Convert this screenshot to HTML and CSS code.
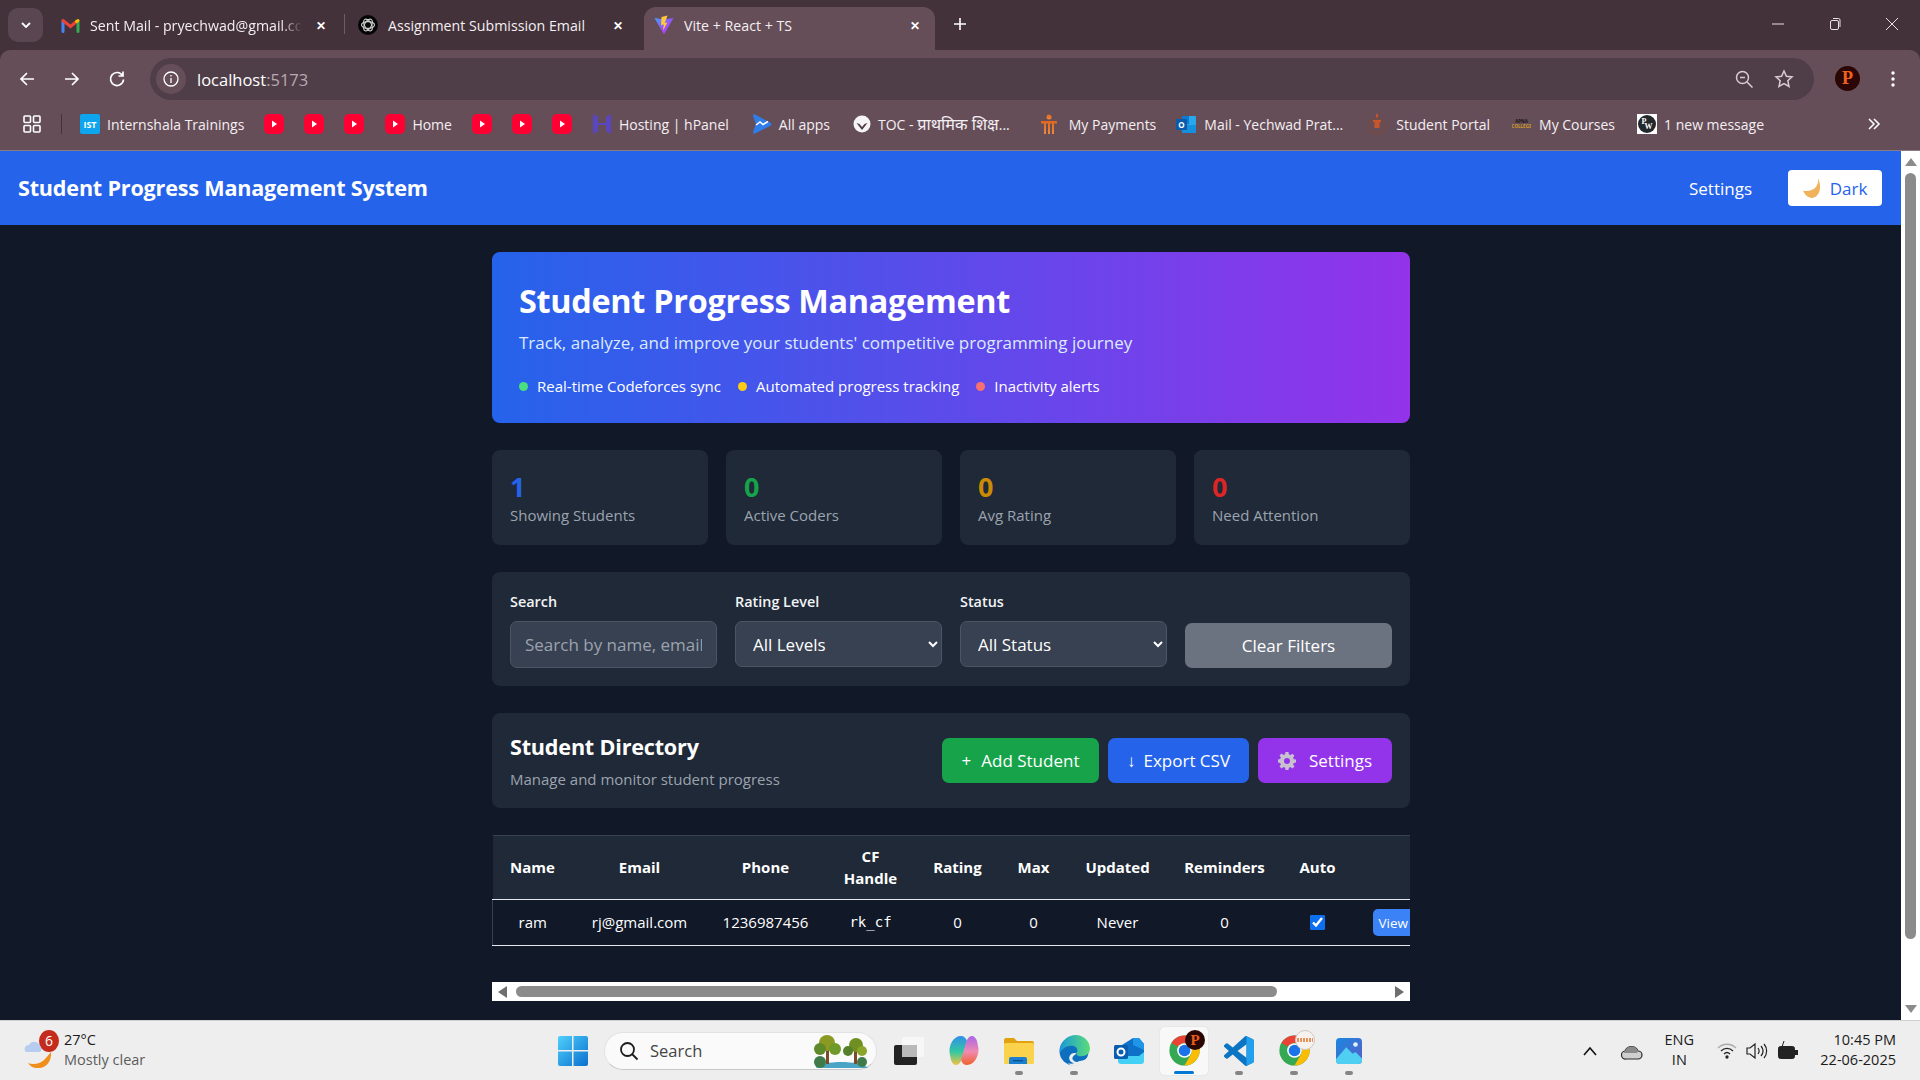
FILE: index.html
```html
<!DOCTYPE html>
<html lang="en">
<head>
    <meta charset="UTF-8">
    <title>Vite + React + TS</title>
    <link rel="stylesheet" href="styles.css">
</head>
<body>
    <svg class="defs" width="0" height="0">
        <defs>
            <symbol id="yt" viewBox="0 0 20 20">
                <rect width="20" height="20" rx="5" fill="#ff0033"/>
                <path d="M8 6.500l5 3.500-5 3.500z" fill="#fff"/>
            </symbol>
            <symbol id="chrome" viewBox="0 0 40 40">
                <circle cx="20" cy="20" r="19.500" fill="#34a853"/>
                <path d="M20 .5a19.500 19.500 0 0 1 17 9.800H20a9.500 9.500 0 0 0-8.200 4.700L3.300 10.200A19.500 19.500 0 0 1 20 .5z" fill="#ea4335"/>
                <path d="M37 10.300A19.500 19.500 0 0 1 20 39.500l8.200-14.500A9.500 9.500 0 0 0 28.200 15.200z" fill="#fbbc04"/>
                <circle cx="20" cy="20" r="9.500" fill="#fff"/>
                <circle cx="20" cy="20" r="7.500" fill="#1a73e8"/>
            </symbol>
            <linearGradient id="wg" x1="0" y1="0" x2="1" y2="1"><stop offset="0" stop-color="#4fd0fb"/><stop offset="1" stop-color="#0a6fd0"/></linearGradient>
            <linearGradient id="pg" x1="0" y1="0" x2="1" y2="1"><stop offset="0" stop-color="#1a87e0"/><stop offset="1" stop-color="#5a5ec8"/></linearGradient>
            <linearGradient id="vg" x1="0" y1="0" x2="1" y2="1"><stop offset="0" stop-color="#41a0ff"/><stop offset=".6" stop-color="#a04cf5"/><stop offset="1" stop-color="#bd34fe"/></linearGradient>
            <linearGradient id="cl" x1="0" y1="0" x2="0" y2="1"><stop offset="0" stop-color="#2f8fe8"/><stop offset=".55" stop-color="#35c8a0"/><stop offset="1" stop-color="#f5c242"/></linearGradient>
            <linearGradient id="cr" x1="0" y1="0" x2="0" y2="1"><stop offset="0" stop-color="#a868e8"/><stop offset=".55" stop-color="#f08ab0"/><stop offset="1" stop-color="#f0602a"/></linearGradient>
            <linearGradient id="eg" x1="0" y1="0" x2="1" y2="0"><stop offset="0" stop-color="#1a9ad8"/><stop offset="1" stop-color="#5bdc78"/></linearGradient>
            <linearGradient id="pay" x1="0" y1="0" x2="0" y2="1"><stop offset="0" stop-color="#e0661e"/><stop offset="1" stop-color="#f08a3a"/></linearGradient>
        </defs>
    </svg>

    <div class="chrome">
        <div class="tabstrip">
            <button class="tab-search">
                <svg width="12" height="12" viewBox="0 0 12 12"><path d="M2 4l4 4 4-4" fill="none" stroke="#fff" stroke-width="1.800"/></svg>
            </button>
            <div class="tab tab-gmail">
                <svg width="19" height="15" viewBox="0 0 19 15" fill="none" stroke-linecap="round">
                    <path d="M2 3.500V13.500" stroke="#4285f4" stroke-width="3"/>
                    <path d="M17 3.500V13.500" stroke="#34a853" stroke-width="3"/>
                    <path d="M2 2.500L9.500 8.500 15 4" stroke="#ea4335" stroke-width="3"/>
                    <path d="M15.500 3.500l1.500-1" stroke="#fbbc04" stroke-width="3"/>
                </svg>
                <span class="tab-title fade">Sent Mail - pryechwad@gmail.com</span>
                <span class="tab-x">✕</span>
            </div>
            <span class="tab-sep"></span>
            <div class="tab tab-gpt">
                <svg width="20" height="20" viewBox="0 0 20 20">
                    <circle cx="10" cy="10" r="10" fill="#050505"/>
                    <g fill="none" stroke="#cfcfcf" stroke-width="1.100">
                        <ellipse cx="10" cy="10" rx="6.500" ry="3.400"/>
                        <ellipse cx="10" cy="10" rx="6.500" ry="3.400" transform="rotate(60 10 10)"/>
                        <ellipse cx="10" cy="10" rx="6.500" ry="3.400" transform="rotate(120 10 10)"/>
                    </g>
                </svg>
                <span class="tab-title">Assignment Submission Email</span>
                <span class="tab-x">✕</span>
            </div>
            <div class="tab tab-active">
                <svg width="20" height="20" viewBox="0 0 20 20">
                    <path d="M0.500 3L10 4.500 19.500 3 10 19.500z" fill="url(#vg)"/>
                    <path d="M13.500 0.500L7.500 2l-.5 8 2.800-.6-.8 6 4.500-8-2.700.5z" fill="#ffc83a"/>
                </svg>
                <span class="tab-title">Vite + React + TS</span>
                <span class="tab-x">✕</span>
            </div>
            <span class="tab-new">
                <svg width="14" height="14" viewBox="0 0 14 14"><path d="M7 1v12M1 7h12" stroke="#fff" stroke-width="1.600"/></svg>
            </span>
            <div class="win-controls">
                <svg width="14" height="14" viewBox="0 0 14 14"><path d="M1 7h12" stroke="#e8e0e4" stroke-width="1"/></svg>
                <svg width="14" height="14" viewBox="0 0 14 14" fill="none" stroke="#e8e0e4"><rect x="2.500" y="3.500" width="8" height="9" rx="1.500"/><path d="M5 1.500h5.500a1.500 1.500 0 0 1 1.500 1.500v7"/></svg>
                <svg width="14" height="14" viewBox="0 0 14 14"><path d="M1 1l12 12M13 1L1 13" stroke="#e8e0e4" stroke-width="1"/></svg>
            </div>
        </div>

        <div class="bars">
            <div class="toolbar">
                <svg class="nav-btn" width="18" height="18" viewBox="0 0 18 18" fill="none" stroke="#fff" stroke-width="1.700"><path d="M16 9H3M9 3L3 9l6 6"/></svg>
                <svg class="nav-btn" width="18" height="18" viewBox="0 0 18 18" fill="none" stroke="#fff" stroke-width="1.700"><path d="M2 9h13M9 3l6 6-6 6"/></svg>
                <svg class="nav-btn" width="18" height="18" viewBox="0 0 18 18" fill="none" stroke="#fff" stroke-width="1.700"><path d="M14.500 5.500A6.500 6.500 0 1 0 15.500 9.500M15 1.500v4.500h-4.500"/></svg>
                <div class="omnibox">
                    <span class="site-info">
                        <svg width="18" height="18" viewBox="0 0 18 18" fill="none" stroke="#fff" stroke-width="1.300"><circle cx="9" cy="9" r="7"/><path d="M9 8v5M9 5v1.500"/></svg>
                    </span>
                    <span class="url">localhost<span class="url-port">:5173</span></span>
                    <svg class="omni-icon" width="20" height="20" viewBox="0 0 20 20" fill="none" stroke="#d8ccd2" stroke-width="1.500"><circle cx="8.500" cy="8.500" r="6"/><path d="M13 13l5.500 5.500M6 8.500h5"/></svg>
                    <svg class="omni-icon" width="20" height="20" viewBox="0 0 20 20" fill="none" stroke="#d8ccd2" stroke-width="1.500"><path d="M10 2l2.400 5.300 5.600.6-4.200 3.800 1.200 5.700L10 14.500l-5 2.900 1.200-5.700L2 7.900l5.600-.6z"/></svg>
                </div>
                <span class="avatar">P</span>
                <svg class="kebab" width="4" height="18" viewBox="0 0 4 18" fill="#fff"><circle cx="2" cy="3" r="1.700"/><circle cx="2" cy="9" r="1.700"/><circle cx="2" cy="15" r="1.700"/></svg>
            </div>

            <div class="bookmarks">
                <svg class="bm-grid" width="18" height="18" viewBox="0 0 18 18" fill="none" stroke="#fff" stroke-width="1.600"><rect x="1" y="1" width="6.500" height="6.500" rx="1"/><rect x="10.500" y="1" width="6.500" height="6.500" rx="1"/><rect x="1" y="10.500" width="6.500" height="6.500" rx="1"/><rect x="10.500" y="10.500" width="6.500" height="6.500" rx="1"/></svg>
                <span class="bm-sep"></span>
                <div class="bm bm-ist">
                    <svg width="20" height="20" viewBox="0 0 20 20"><rect width="20" height="20" rx="2" fill="#0ca5ee"/><text x="10" y="14" class="ist-text">IST</text></svg>
                    <span>Internshala Trainings</span>
                </div>
                <svg class="bm-yt" width="20" height="20"><use href="#yt"/></svg>
                <svg class="bm-yt" width="20" height="20"><use href="#yt"/></svg>
                <svg class="bm-yt" width="20" height="20"><use href="#yt"/></svg>
                <div class="bm bm-home">
                    <svg width="20" height="20"><use href="#yt"/></svg>
                    <span>Home</span>
                </div>
                <svg class="bm-yt" width="20" height="20"><use href="#yt"/></svg>
                <svg class="bm-yt" width="20" height="20"><use href="#yt"/></svg>
                <svg class="bm-yt" width="20" height="20"><use href="#yt"/></svg>
                <div class="bm bm-host">
                    <svg width="20" height="20" viewBox="0 0 20 20" fill="#5a46c0"><path d="M1 0l5 3v6h8V3l5-3v20l-5-3v-6H6v6l-5 3z"/></svg>
                    <span>Hosting | hPanel</span>
                </div>
                <div class="bm bm-apps">
                    <svg width="20" height="20" viewBox="0 0 20 20"><path d="M1 2c0-1.500 1-2 2-1.500l15 8c2 1 2 2.500 0 3.500L3 19.500c-1 .5-2 0-2-1.500l3-8z" fill="#2f7de8"/><path d="M4 11l4-3 3 2.500 5-3" fill="none" stroke="#fff" stroke-width="1.500"/></svg>
                    <span>All apps</span>
                </div>
                <div class="bm bm-toc">
                    <svg width="18" height="20" viewBox="0 0 18 20"><circle cx="9" cy="10" r="8.500" fill="#f6f4f5"/><path d="M3.500 9l5.500 7 5.500-7-3 1-2.500 3-2.500-3z" fill="#4e3b44"/></svg>
                    <span>TOC - <span class="deva">प्राथमिक शिक्ष</span>...</span>
                </div>
                <div class="bm bm-pay">
                    <svg width="18" height="22" viewBox="0 0 18 22" fill="url(#pay)"><circle cx="9" cy="4" r="2.500"/><path d="M1 8h16v2.500H1zM4 10.500h2V21H4zM8 10.500h2V21H8zM12 10.500h2V21h-2z"/></svg>
                    <span>My Payments</span>
                </div>
                <div class="bm bm-mail">
                    <svg width="20" height="20" viewBox="0 0 20 20"><rect x="6" y="2" width="14" height="17" rx="1" fill="#28a8ea"/><rect x="6" y="2" width="7" height="8" fill="#0f78d4"/><rect x="6" y="11" width="14" height="8" fill="#1490df"/><rect y="5" width="11" height="11" rx="1" fill="#0a5cab"/><text x="5.500" y="13.800" class="o-text">O</text></svg>
                    <span>Mail - Yechwad Prat...</span>
                </div>
                <div class="bm bm-student">
                    <svg width="18" height="24" viewBox="0 0 18 24" fill="none"><circle cx="9" cy="14" r="8" stroke="#7a4a3f" stroke-width="1.500"/><path d="M9 1c1.500 2 1.500 4 0 5-1.500-1-1.500-3 0-5zM5 8h8v2h-1.500v6h-5v-6H5z" fill="#c9552a"/></svg>
                    <span>Student Portal</span>
                </div>
                <div class="bm bm-courses">
                    <svg width="19" height="14" viewBox="0 0 19 14"><text x="9.500" y="5.500" class="apna-top">APNA</text><text x="9.500" y="11" class="apna-low">COLLEGE</text></svg>
                    <span>My Courses</span>
                </div>
                <div class="bm bm-msg">
                    <svg width="20" height="20" viewBox="0 0 20 20"><rect width="20" height="20" fill="#fff"/><circle cx="10" cy="10" r="9" fill="#23282d"/><text x="7" y="9.500" class="wp-text">P</text><text x="11.500" y="15" class="wp-text">W</text></svg>
                    <span>1 new message</span>
                </div>
                <svg class="bm-more" width="14" height="14" viewBox="0 0 14 14" fill="none" stroke="#fff" stroke-width="1.500"><path d="M2 2l5 5-5 5M7 2l5 5-5 5"/></svg>
            </div>
        </div>
    </div>

    <div class="viewport">
        <div class="page">
            <header class="app-header">
                <div class="app-title">Student Progress Management System</div>
                <div class="header-right">
                    <a class="header-link">Settings</a>
                    <button class="theme-btn">
                        <svg width="20" height="22" viewBox="0 0 20 22"><path d="M15 1c1 6-2 13-12 13-1 0-2 0-3-.500C2 19 7 22 11 20.500c6-2 8-11 4-19.500z" fill="#f0b35c"/></svg>
                        Dark
                    </button>
                </div>
            </header>

            <main class="main">
                <section class="hero">
                    <h1>Student Progress Management</h1>
                    <p class="hero-sub">Track, analyze, and improve your students' competitive programming journey</p>
                    <div class="hero-points">
                        <span class="point"><i class="dot dot-green"></i>Real-time Codeforces sync</span>
                        <span class="point"><i class="dot dot-yellow"></i>Automated progress tracking</span>
                        <span class="point"><i class="dot dot-red"></i>Inactivity alerts</span>
                    </div>
                </section>

                <section class="stats">
                    <div class="stat"><div class="stat-num num-blue">1</div><div class="stat-label">Showing Students</div></div>
                    <div class="stat"><div class="stat-num num-green">0</div><div class="stat-label">Active Coders</div></div>
                    <div class="stat"><div class="stat-num num-amber">0</div><div class="stat-label">Avg Rating</div></div>
                    <div class="stat"><div class="stat-num num-red">0</div><div class="stat-label">Need Attention</div></div>
                </section>

                <section class="filters">
                    <div class="field">
                        <label>Search</label>
                        <input type="text" placeholder="Search by name, email or handle">
                    </div>
                    <div class="field">
                        <label>Rating Level</label>
                        <select><option>All Levels</option></select>
                    </div>
                    <div class="field">
                        <label>Status</label>
                        <select><option>All Status</option></select>
                    </div>
                    <button class="clear-btn">Clear Filters</button>
                </section>

                <section class="directory">
                    <div>
                        <h2>Student Directory</h2>
                        <p>Manage and monitor student progress</p>
                    </div>
                    <div class="dir-actions">
                        <button class="btn btn-green"><span>+</span>Add Student</button>
                        <button class="btn btn-blue"><span>↓</span>Export CSV</button>
                        <button class="btn btn-purple">
                            <svg width="18" height="18" viewBox="0 0 18 18"><path fill="#c8c2d0" fill-rule="evenodd" d="M7.500 0h3l.4 2.400 1.500.7 2-1.400 2.100 2.100-1.400 2 .7 1.500 2.200.2v3l-2.200.4-.7 1.500 1.400 2-2.100 2.100-2-1.400-1.500.7-.4 2.200h-3l-.4-2.200-1.500-.7-2 1.400-2.100-2.100 1.400-2-.7-1.500L0 10.500v-3l2.200-.4.7-1.500-1.400-2 2.100-2.100 2 1.400 1.500-.7zM9 6a3 3 0 1 0 0 6 3 3 0 0 0 0-6z"/></svg>
                            Settings
                        </button>
                    </div>
                </section>

                <div class="table-wrap">
                    <table class="students">
                        <colgroup>
                            <col class="c-name"><col class="c-email"><col class="c-phone"><col class="c-cf"><col class="c-rating">
                            <col class="c-max"><col class="c-updated"><col class="c-rem"><col class="c-auto"><col class="c-act">
                        </colgroup>
                        <thead>
                            <tr>
                                <th>Name</th><th>Email</th><th>Phone</th><th>CF<br>Handle</th><th>Rating</th>
                                <th>Max</th><th>Updated</th><th>Reminders</th><th>Auto</th><th></th>
                            </tr>
                        </thead>
                        <tbody>
                            <tr>
                                <td>ram</td><td>rj@gmail.com</td><td>1236987456</td><td class="mono">rk_cf</td><td>0</td>
                                <td>0</td><td>Never</td><td>0</td>
                                <td class="check"><input type="checkbox" checked></td>
                                <td class="act"><button class="view-btn">View</button></td>
                            </tr>
                        </tbody>
                    </table>
                </div>

                <div class="hscroll">
                    <i class="arrow-left"></i>
                    <div class="hscroll-track"><div class="hscroll-thumb"></div></div>
                    <i class="arrow-right"></i>
                </div>
            </main>
        </div>
        <div class="vscroll">
            <i class="arrow-up"></i>
            <div class="vscroll-thumb"></div>
            <i class="arrow-down"></i>
        </div>
    </div>

    <footer class="taskbar">
        <div class="weather">
            <svg class="weather-icon" width="30" height="36" viewBox="0 0 30 36">
                <path d="M29 12c1 9-5 17-14 16-4 0-7-2-9-5 5 2 12 1 16-3 3-3 5-6 7-8z" fill="#f08e1c" transform="translate(-2 7)"/>
                <path d="M2 19a4 4 0 0 1 3-7 6 6 0 0 1 11 1 3.500 3.500 0 0 1 0 6z" fill="#b6cdf0"/>
            </svg>
            <span class="weather-badge">6</span>
            <div class="weather-text"><div>27°C</div><div class="weather-sub">Mostly clear</div></div>
        </div>

        <div class="task-center">
            <svg class="ti-win" width="30" height="30" viewBox="0 0 30 30">
                <path fill="url(#wg)" d="M0 2a2 2 0 0 1 2-2h12v14H0zM15.500 0H28a2 2 0 0 1 2 2v12H15.500zM0 15.500h14V30H2a2 2 0 0 1-2-2zM15.500 15.500H30V28a2 2 0 0 1-2 2H15.500z"/>
            </svg>
            <div class="task-search">
                <svg width="20" height="20" viewBox="0 0 20 20" fill="none" stroke="#1c1c1c" stroke-width="1.800"><circle cx="8.500" cy="8.500" r="6.500"/><path d="M13 13l5.500 5.500"/></svg>
                <span>Search</span>
                <svg class="search-art" width="56" height="34" viewBox="0 0 56 34">
                    <path d="M4 34c6-8 44-8 52 0z" fill="#4aa5c4"/>
                    <rect x="14" y="12" width="3" height="18" fill="#7a4b2b"/><rect x="42" y="14" width="3" height="16" fill="#7a4b2b"/>
                    <circle cx="15" cy="9" r="8" fill="#8a9a22"/><circle cx="8" cy="15" r="6" fill="#5f8a2a"/><circle cx="23" cy="15" r="6" fill="#6f9a2a"/>
                    <circle cx="44" cy="11" r="7" fill="#6f8f22"/><circle cx="50" cy="17" r="5" fill="#8aa52a"/><circle cx="36" cy="17" r="5" fill="#557f2a"/>
                    <circle cx="8" cy="28" r="6" fill="#3f7a4a"/><circle cx="50" cy="28" r="5" fill="#3f7a4a"/>
                </svg>
            </div>
            <svg class="ti" width="30" height="28" viewBox="0 0 30 28"><rect x="0" y="8" width="23" height="20" rx="2" fill="#222"/><rect x="8" y="0" width="22" height="20" rx="2" fill="#f7f7f7"/><rect x="8" y="8" width="15" height="12" fill="#b9b9b9"/></svg>
            <svg class="ti ti-copilot" width="30" height="31" viewBox="0 0 30 31"><path d="M12 1c3 0 5 2 6 5l-5 17c-1 4-3 7-6 7-2 0-4-2-5-5l-1-5C-1 13 3 1 12 1z" fill="url(#cl)"/><path d="M18 30c-3 0-5-2-6-5l5-17c1-4 3-7 6-7 2 0 4 2 5 5l1 5c2 6-2 19-11 19z" fill="url(#cr)"/></svg>
            <div class="ti-wrap">
                <svg width="30" height="26" viewBox="0 0 30 26"><path d="M0 2a2 2 0 0 1 2-2h8l3 3h15a2 2 0 0 1 2 2v3H0z" fill="#dfa312"/><rect y="5" width="30" height="21" rx="1.500" fill="#fbd24c"/><path d="M5 26v-5a2 2 0 0 1 2-2h14a2 2 0 0 1 2 2v5z" fill="#1a7fd0"/><rect x="9" y="22" width="10" height="1.300" fill="#0c4f8f"/></svg>
                <i class="task-dot"></i>
            </div>
            <div class="ti-wrap">
                <svg width="31" height="31" viewBox="0 0 32 32"><circle cx="15.500" cy="16.500" r="15" fill="#0f6fbf"/><path d="M1 14C3 5 10 0 17 0c9 0 15 7 15 14 0 5-4 8-9 8-3 0-5-1-5-3 0-1 1-2 1-3 0-3-3-5-6-5C9 11 4 13 1 18z" fill="url(#eg)"/><path d="M31 21c-2 6-8 11-15 11-3 0-5-1-7-3 2 1 5 1 8-.5 3-1 4-2 6-2 3 0 6-2 8-5.500z" fill="#eeeeee"/><path d="M18 19c-1 1-5 3-4 6 1 2 3 3 6 3-3 2-7 1-9-2-2-5 3-9 7-7z" fill="#eeeeee"/></svg>
                <i class="task-dot"></i>
            </div>
            <div class="ti-wrap">
                <svg width="30" height="26" viewBox="0 0 30 26"><path d="M4 14h26v9a3 3 0 0 1-3 3H7a3 3 0 0 1-3-3z" fill="#44d0f5"/><path d="M8 7L19 0h6l5 6v8l-5 4H8z" fill="#0f70c8"/><path d="M19 0h6l5 6v6l-11-5z" fill="#1f95e8"/><rect y="7" width="14" height="14" rx="1.500" fill="#0a5cb0"/><circle cx="7" cy="14" r="3.500" fill="none" stroke="#fff" stroke-width="2"/></svg>
            </div>
            <div class="ti-wrap ti-active">
                <svg width="31" height="31"><use href="#chrome"/></svg>
                <span class="chrome-p">P</span>
                <i class="task-bar"></i>
            </div>
            <div class="ti-wrap">
                <svg width="30" height="30" viewBox="0 0 100 100"><path fill="#0b75c4" fill-rule="evenodd" d="M71 99.300a6.200 6.200 0 0 0 4.900-.2l20.500-9.900a6.200 6.200 0 0 0 3.500-5.600V16.400a6.200 6.200 0 0 0-3.500-5.600L75.800.9a6.200 6.200 0 0 0-7.100 1.200L29.300 38.200 12.100 25.100a4.100 4.100 0 0 0-5.300.2l-5.500 5a4.100 4.100 0 0 0 0 6.100L16.200 50 1.300 63.600a4.100 4.100 0 0 0 0 6.100l5.500 5a4.100 4.100 0 0 0 5.300.2l17.200-13.100 39.400 36a6.200 6.200 0 0 0 2.300 1.500zM75 27.300L45.100 50 75 72.700z"/><path fill="#22a0ee" d="M75 .5l21.400 10.300a6.200 6.200 0 0 1 3.500 5.600v67.200a6.200 6.200 0 0 1-3.500 5.600L75 99.500z"/></svg>
                <i class="task-dot"></i>
            </div>
            <div class="ti-wrap">
                <svg width="31" height="31"><use href="#chrome"/></svg>
                <span class="chrome-badge"></span>
                <i class="task-dot"></i>
            </div>
            <div class="ti-wrap">
                <svg width="26" height="26" viewBox="0 0 28 28"><rect width="28" height="28" rx="4" fill="url(#pg)"/><path d="M0 23L11 10l7 7 3-2 7 7v2a4 4 0 0 1-4 4H4a4 4 0 0 1-4-4z" fill="#4fd0f2"/><circle cx="21" cy="7" r="2.500" fill="#dff3fc"/></svg>
                <i class="task-dot"></i>
            </div>
        </div>

        <div class="tray">
            <svg class="tray-caret" width="16" height="10" viewBox="0 0 16 10" fill="none" stroke="#111" stroke-width="1.600"><path d="M2 9l6-7 6 7"/></svg>
            <svg class="tray-cloud" width="22" height="18" viewBox="0 0 22 18"><path d="M5 17a4 4 0 0 1-1-8 7 7 0 0 1 13 0 4 4 0 0 1 0 8z" fill="#cfcfcf" stroke="#2a2a2a" stroke-width="1.200"/><path d="M4 9a7 7 0 0 1 13 0 4 4 0 0 1-1 2H3z" fill="#8a8a8a"/></svg>
            <div class="tray-lang"><div>ENG</div><div>IN</div></div>
            <svg class="tray-ic" width="20" height="18" viewBox="0 0 20 18" fill="none" stroke="#222" stroke-width="1.300"><path d="M1 6c5-5 13-5 18 0" stroke="#aaa"/><path d="M4 9c3.500-3.500 8.500-3.500 12 0M7 12c2-2 4-2 6 0"/><circle cx="10" cy="15" r="1" fill="#222"/></svg>
            <svg class="tray-ic" width="22" height="18" viewBox="0 0 22 18" fill="none" stroke="#222" stroke-width="1.200"><path d="M1 6h3l5-4v14l-5-4H1zM12 6c1.500 2 1.500 4 0 6M15 4c2.500 3 2.500 7 0 10M18 2c3.500 4 3.500 10 0 14"/></svg>
            <svg class="tray-ic" width="22" height="20" viewBox="0 0 22 20"><rect x="1.500" y="5.500" width="16" height="12" rx="2" fill="#222" stroke="#222"/><rect x="18" y="9" width="3" height="5" fill="#222"/><path d="M7 0L5 6h3" fill="none" stroke="#222"/></svg>
            <div class="tray-clock"><div>10:45 PM</div><div>22-06-2025</div></div>
        </div>
    </footer>
</body>
</html>
```

FILE: styles.css
```css
* {
    box-sizing: border-box;
}

html, body {
    margin: 0;
    height: 100%;
    overflow: hidden;
}

body {
    display: flex;
    flex-direction: column;
    width: 1920px;
    height: 1080px;
    font-family: "Open Sans", "Noto Sans", sans-serif;
    font-stretch: 92%;
    background: #111827;
    color: #fff;
}

.defs {
    position: absolute;
}

/* browser chrome */
.chrome {
    height: 151px;
    background: #43323a;
    border-bottom: 1px solid #8a7a82;
    flex: none;
}

.tabstrip {
    height: 50px;
    display: flex;
    align-items: flex-end;
    font-size: 14.200px;
    padding-left: 8px;
}

.tab-search {
    width: 35px;
    height: 34px;
    margin-bottom: 8px;
    border: 0;
    border-radius: 10px;
    background: #5a4650;
    display: flex;
    align-items: center;
    justify-content: center;
    padding: 0;
}

.tab {
    height: 43px;
    display: flex;
    align-items: center;
    border-radius: 12px 12px 0 0;
    color: #f4eff2;
}

.tab-gmail {
    width: 301px;
    padding: 0 18px 7px 18px;
}

.tab-gpt {
    width: 299px;
    padding: 0 21px 7px 13px;
}

.tab-active {
    width: 291px;
    background: #664e59;
    padding: 0 15px 7px 10px;
}

.tab-title {
    flex: 1;
    margin-left: 10px;
    white-space: nowrap;
    overflow: hidden;
}

.fade {
    -webkit-mask-image: linear-gradient(90deg, #000 90%, transparent);
    mask-image: linear-gradient(90deg, #000 90%, transparent);
    margin-right: 14px;
}

.tab-x {
    font-size: 12px;
    color: #fff;
    font-weight: 700;
}

.tab-sep {
    width: 1px;
    height: 20px;
    margin-bottom: 16px;
    background: #6e5b65;
}

.tab-new {
    margin: 0 0 19px 18px;
    display: flex;
}

.win-controls {
    margin: 0 21px 19px auto;
    display: flex;
    gap: 43px;
}

.bars {
    height: 100px;
    background: #664e59;
    border-radius: 10px 10px 0 0;
}

.toolbar {
    height: 50px;
    display: flex;
    align-items: flex-end;
    padding-left: 18px;
}

.nav-btn {
    margin: 0 27px 12px 0;
}

.nav-btn:nth-child(3) {
    margin-right: 24px;
}

.omnibox {
    width: 1664px;
    height: 42px;
    border-radius: 21px;
    background: #4f3e48;
    display: flex;
    align-items: center;
    padding: 0 20px 0 6px;
    font-size: 16.500px;
}

.site-info {
    width: 30px;
    height: 30px;
    border-radius: 50%;
    background: #664e59;
    display: flex;
    align-items: center;
    justify-content: center;
}

.url {
    margin: 0 auto 0 11px;
}

.url-port {
    color: #b9aab2;
}

.omni-icon {
    margin-left: 20px;
}

.avatar {
    width: 25px;
    height: 25px;
    margin: 0 0 9px 21px;
    border-radius: 50%;
    background: #2a0705;
    color: #f2611c;
    font: 700 18px "Liberation Serif", serif;
    text-align: center;
    line-height: 25px;
}

.kebab {
    margin: 0 0 12px 31px;
}

.bookmarks {
    height: 50px;
    display: flex;
    align-items: center;
    font-size: 14px;
    color: #f4eff2;
    padding: 0 0 2px 23px;
}

.bm-sep {
    width: 1px;
    height: 20px;
    margin: 0 18px 0 20px;
    background: #43323a;
}

.bm {
    display: flex;
    align-items: center;
    gap: 7px;
    white-space: nowrap;
}

.deva {
    font-size: 16.300px;
    line-height: 14px;
}

.bm-yt {
    margin-left: 20px;
}

.bm-home {
    margin-left: 21px;
}

.bm-host {
    margin-left: 20px;
}

.bm-apps {
    margin-left: 23px;
}

.bm-toc {
    margin-left: 23px;
}

.bm-pay {
    margin-left: 30px;
    gap: 11px;
}

.bm-mail {
    margin-left: 20px;
    gap: 8px;
}

.bm-student {
    margin-left: 25px;
    gap: 10px;
}

.bm-courses {
    margin-left: 22px;
    gap: 8px;
}

.bm-msg {
    margin-left: 22px;
}

.bm-more {
    margin-left: auto;
    margin-right: 39px;
}

.ist-text {
    font-size: 9px;
    font-weight: 700;
    fill: #fff;
    text-anchor: middle;
}

.o-text {
    font-size: 8px;
    font-weight: 700;
    fill: #fff;
    text-anchor: middle;
}

.apna-top {
    font-size: 4.500px;
    font-weight: 700;
    fill: #1b1216;
    text-anchor: middle;
}

.apna-low {
    font-size: 4.500px;
    font-weight: 700;
    fill: #d19a24;
    text-anchor: middle;
}

.wp-text {
    font: 700 8px "Liberation Serif", serif;
    fill: #fff;
    text-anchor: middle;
}

/* page area */
.viewport {
    height: 869px;
    display: flex;
    flex: none;
}

.page {
    flex: 1;
    padding-left: 1px;
    overflow: hidden;
}

.vscroll {
    width: 19px;
    background: #fff;
    display: flex;
    flex-direction: column;
    align-items: center;
    padding: 7px 0;
}

.vscroll-thumb {
    width: 11px;
    height: 766px;
    margin: 7px 0 auto;
    border-radius: 6px;
    background: #8b8b8b;
}

.arrow-up, .arrow-down {
    width: 0;
    height: 0;
    border-left: 6px solid transparent;
    border-right: 6px solid transparent;
}

.arrow-up {
    border-bottom: 8px solid #8b8b8b;
}

.arrow-down {
    border-top: 8px solid #8b8b8b;
}

.app-header {
    height: 74px;
    margin-left: -1px;
    background: #2563eb;
    display: flex;
    align-items: center;
    justify-content: space-between;
    padding: 0 19px 0 18px;
}

.app-title {
    font-size: 21.600px;
    font-weight: 700;
    letter-spacing: -0.2px;
    margin-bottom: 2px;
}

.header-right {
    display: flex;
    align-items: center;
    gap: 36px;
    font-size: 17px;
}

.theme-btn {
    width: 94px;
    height: 36px;
    border: 0;
    border-radius: 4px;
    background: #fff;
    color: #2563eb;
    font: inherit;
    display: flex;
    align-items: center;
    justify-content: center;
    gap: 7px;
}

.main {
    width: 918px;
    margin: 27px auto 0;
}

.hero {
    height: 171px;
    border-radius: 8px;
    padding: 26px 27px 27px;
    background: linear-gradient(90deg, #2563eb, #9333ea);
    margin-bottom: 27px;
}

.hero h1 {
    margin: 0;
    font-size: 32.400px;
    line-height: 44px;
    font-weight: 700;
    letter-spacing: -0.3px;
}

.hero-sub {
    margin: 9px 0 0;
    font-size: 17px;
    line-height: 24px;
    color: #dbeafe;
}

.hero-points {
    margin-top: 20px;
    display: flex;
    gap: 17px;
    font-size: 15px;
    line-height: 22px;
}

.point {
    display: flex;
    align-items: center;
}

.dot {
    width: 9px;
    height: 9px;
    margin-right: 9px;
    border-radius: 50%;
}

.dot-green {
    background: #4ade80;
}

.dot-yellow {
    background: #facc15;
}

.dot-red {
    background: #f87171;
}

.stats {
    display: grid;
    grid-template-columns: repeat(4, 1fr);
    gap: 18px;
    margin-bottom: 27px;
}

.stat {
    height: 95px;
    padding: 18px;
    border-radius: 8px;
    background: #1f2937;
}

.stat-num {
    font-size: 27px;
    font-weight: 700;
    line-height: 37px;
}

.num-blue {
    color: #2563eb;
}

.num-green {
    color: #16a34a;
}

.num-amber {
    color: #ca8a04;
}

.num-red {
    color: #dc2626;
}

.stat-label {
    font-size: 15px;
    line-height: 21px;
    color: #9ca3af;
}

.filters {
    display: grid;
    grid-template-columns: repeat(4, 207px);
    gap: 18px;
    align-items: end;
    height: 114px;
    padding: 18px;
    border-radius: 8px;
    background: #1f2937;
    margin-bottom: 27px;
}

.field {
    display: flex;
    flex-direction: column;
}

.field label {
    font-size: 14.400px;
    font-weight: 600;
    line-height: 24px;
    margin-bottom: 7px;
    color: #f3f4f6;
}

.field input, .field select {
    width: 100%;
    border: 1px solid #4b5563;
    border-radius: 7px;
    background: #374151;
    color: #fff;
    font: inherit;
    font-size: 17px;
    color-scheme: dark;
}

.field input {
    height: 47px;
    padding: 0 14px;
}

.field input::placeholder {
    color: #9ca3af;
}

.field select {
    height: 46px;
    margin-bottom: 1px;
    padding: 0 13px;
}

.clear-btn {
    height: 45px;
    border: 0;
    border-radius: 7px;
    background: #6b7280;
    color: #fff;
    font: inherit;
    font-size: 17px;
}

.directory {
    height: 95px;
    padding: 0 18px;
    border-radius: 8px;
    background: #1f2937;
    display: flex;
    align-items: center;
    justify-content: space-between;
    margin-bottom: 27px;
}

.directory h2 {
    margin: 0;
    font-size: 21.600px;
    line-height: 28px;
    font-weight: 700;
    letter-spacing: -0.2px;
}

.directory p {
    margin: 8px 0 0;
    font-size: 15px;
    line-height: 20px;
    color: #9ca3af;
}

.dir-actions {
    display: flex;
    gap: 9px;
}

.btn {
    height: 45px;
    border: 0;
    border-radius: 7px;
    color: #fff;
    font: inherit;
    font-size: 17px;
    display: flex;
    align-items: center;
    justify-content: center;
    gap: 10px;
}

.btn-green {
    width: 157px;
    background: #16a34a;
}

.btn-blue {
    width: 141px;
    background: #2563eb;
    gap: 8px;
}

.btn-purple {
    width: 134px;
    background: #9333ea;
    gap: 13px;
}

.table-wrap {
    overflow: hidden;
    padding-bottom: 36px;
}

.students {
    width: 1000px;
    table-layout: fixed;
    border-collapse: collapse;
    font-size: 15px;
    text-align: center;
}

.c-name { width: 80px; }
.c-email { width: 134px; }
.c-phone { width: 118px; }
.c-cf { width: 92px; }
.c-rating { width: 82px; }
.c-max { width: 70px; }
.c-updated { width: 98px; }
.c-rem { width: 116px; }
.c-auto { width: 70px; }
.c-act { width: 140px; }

.students th {
    height: 64px;
    background: #1f2937;
    font-weight: 700;
    line-height: 22px;
    padding: 0 0 2px;
    border-top: 1px solid #374151;
    border-bottom: 1px solid #e5e7eb;
}

.students td {
    height: 46px;
    padding: 0 0 2px;
    border-bottom: 1px solid #e5e7eb;
}

.students tr > td:first-child {
    border-left: 1px solid #374151;
}

.mono {
    font-family: "DejaVu Sans Mono", "Liberation Mono", monospace;
    font-stretch: normal;
    font-size: 14px;
}

.students .check {
    padding: 0;
}

.students input {
    width: 15px;
    height: 15px;
    margin: 0;
    accent-color: #0b6ff0;
    vertical-align: -1px;
}

.students .act {
    text-align: left;
    padding: 0 0 0 20px;
}

.view-btn {
    width: 56px;
    height: 27px;
    border: 0;
    border-radius: 5px;
    background: #3b82f6;
    color: #fff;
    font: inherit;
    font-size: 13.500px;
    padding: 0 0 0 6px;
    text-align: left;
    vertical-align: middle;
}

.hscroll {
    height: 19px;
    background: #fff;
    display: flex;
    align-items: center;
    padding: 0 6px;
}

.hscroll-track {
    flex: 1;
    padding-left: 9px;
}

.hscroll-thumb {
    height: 11px;
    width: 761px;
    border-radius: 6px;
    background: #8b8b8b;
}

.arrow-left, .arrow-right {
    width: 0;
    height: 0;
    border-top: 6px solid transparent;
    border-bottom: 6px solid transparent;
}

.arrow-left {
    border-right: 9px solid #6e6e6e;
}

.arrow-right {
    border-left: 9px solid #6e6e6e;
}

/* windows taskbar */
.taskbar {
    height: 60px;
    flex: none;
    display: flex;
    align-items: center;
    background: #eeeeee;
    border-top: 1px solid #cfcfcf;
    color: #1b1b1b;
    font-size: 14.500px;
}

.weather {
    width: 558px;
    display: flex;
    align-items: center;
    padding-left: 24px;
    position: relative;
}

.weather-icon {
    margin-right: 10px;
}

.weather-badge {
    position: absolute;
    left: 39px;
    top: -2px;
    width: 20px;
    height: 22px;
    border-radius: 50%;
    background: #c42b1c;
    color: #fff;
    font-size: 14px;
    line-height: 22px;
    text-align: center;
}

.weather-text {
    line-height: 20px;
    margin-top: -2px;
}

.weather-sub {
    color: #5c5c5c;
}

.task-center {
    display: flex;
    align-items: center;
}

.ti-win {
    margin-right: 16px;
}

.task-search {
    width: 273px;
    height: 38px;
    border-radius: 19px;
    background: #fafafa;
    border: 1px solid #e2e2e2;
    border-bottom-color: #c8c8c8;
    display: flex;
    align-items: center;
    padding-left: 14px;
    font-size: 16.500px;
    color: #444;
    gap: 11px;
}

.search-art {
    margin-left: auto;
    margin-right: 8px;
}

.ti {
    margin-left: 17px;
}

.ti-copilot {
    margin: 0 9px 0 25px;
}

.ti-wrap {
    width: 48px;
    height: 48px;
    margin-left: 7px;
    display: flex;
    align-items: center;
    justify-content: center;
    position: relative;
}

.ti-active {
    background: #f8f8f8;
    border-radius: 4px;
    box-shadow: 0 0 1px #bbb;
}

.task-dot {
    position: absolute;
    left: 20px;
    bottom: 0;
    width: 8px;
    height: 4px;
    border-radius: 2px;
    background: #858585;
}

.task-bar {
    position: absolute;
    left: 14px;
    bottom: 1px;
    width: 20px;
    height: 3px;
    border-radius: 2px;
    background: #0078d4;
}

.chrome-p {
    position: absolute;
    left: 25px;
    top: 3px;
    width: 20px;
    height: 20px;
    border-radius: 50%;
    background: #2a0705;
    color: #e8601c;
    font: 700 15px "Liberation Serif", serif;
    text-align: center;
    line-height: 20px;
}

.chrome-badge {
    position: absolute;
    left: 25px;
    top: 3px;
    width: 20px;
    height: 20px;
    border-radius: 50%;
    border: 1px solid #cfc8c4;
    background: repeating-linear-gradient(90deg, #e8935a 0 2px, #f8f2ee 2px 3px) center / 16px 4px no-repeat #f8f2ee;
}

.tray {
    display: flex;
    align-items: center;
    margin-left: auto;
    padding-right: 24px;
}

.tray-caret {
    margin-right: 23px;
}

.tray-cloud {
    margin-right: 20px;
}

.tray-lang {
    width: 32px;
    margin: -2px 22px 0 0;
    text-align: center;
    line-height: 20px;
}

.tray-ic {
    margin-right: 9px;
}

.tray-clock {
    margin: -2px 0 0 12px;
    text-align: right;
    line-height: 20px;
}
```
